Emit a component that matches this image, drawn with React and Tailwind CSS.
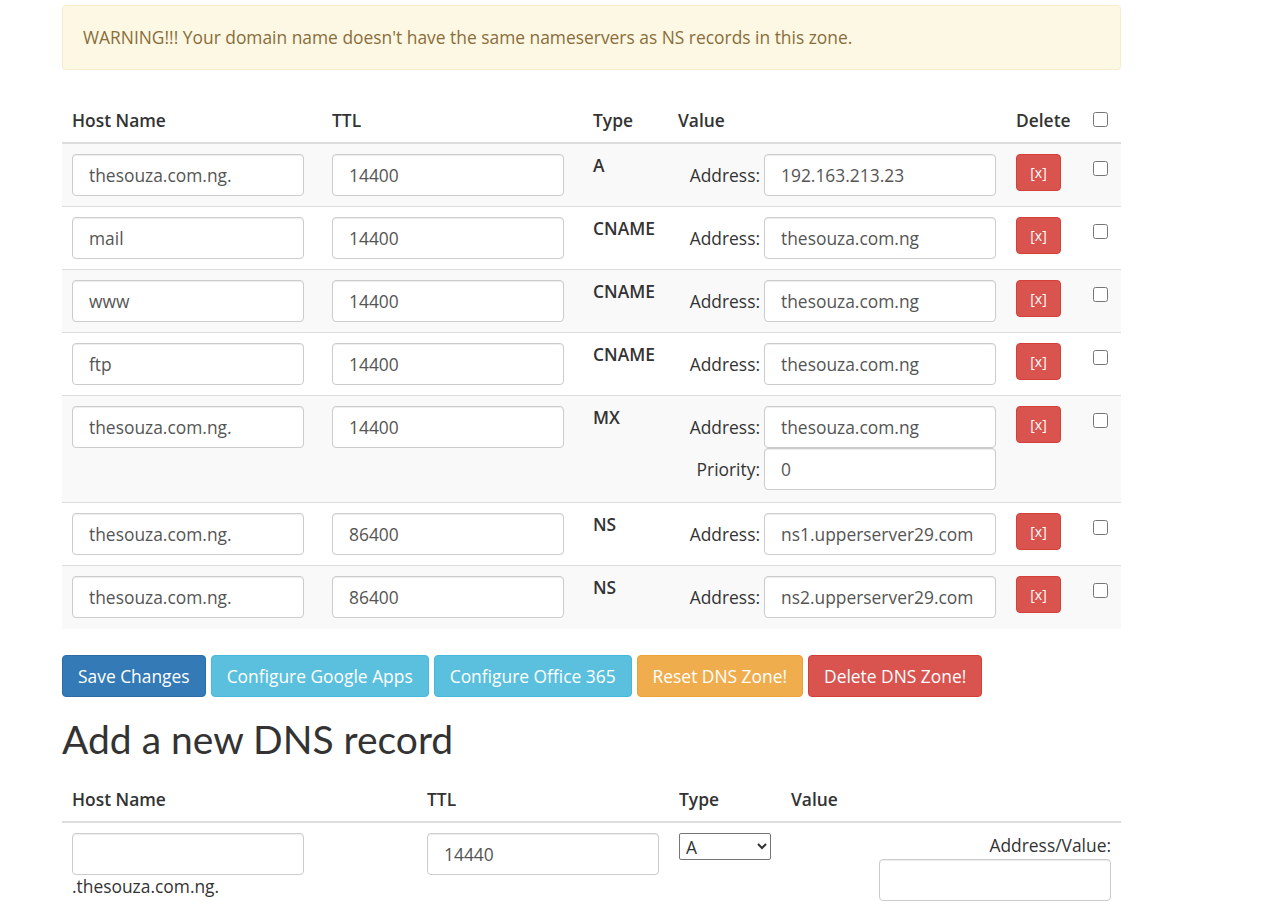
import React from 'react';

const records = [
  { host: 'thesouza.com.ng.', ttl: '14400', type: 'A', address: '192.163.213.23' },
  { host: 'mail', ttl: '14400', type: 'CNAME', address: 'thesouza.com.ng' },
  { host: 'www', ttl: '14400', type: 'CNAME', address: 'thesouza.com.ng' },
  { host: 'ftp', ttl: '14400', type: 'CNAME', address: 'thesouza.com.ng' },
  { host: 'thesouza.com.ng.', ttl: '14400', type: 'MX', address: 'thesouza.com.ng', priority: '0' },
  { host: 'thesouza.com.ng.', ttl: '86400', type: 'NS', address: 'ns1.upperserver29.com' },
  { host: 'thesouza.com.ng.', ttl: '86400', type: 'NS', address: 'ns2.upperserver29.com' },
];

const inputCls =
  'block w-[232px] h-[42px] rounded-[4px] border border-[#ccc] bg-white px-4 text-[17.4px] text-[#555] shadow-[inset_0_1px_1px_rgba(0,0,0,0.075)] outline-none';

const rowGrid = 'grid grid-cols-[260px_261px_85px_338px_75px_40px]';

function Field({ label, value }) {
  return (
    <div className="flex items-center justify-end gap-1">
      <span className="text-[#333]">{label}</span>
      <input className={inputCls} defaultValue={value} />
    </div>
  );
}

function RecordRow({ r, striped, last }) {
  const mx = r.priority !== undefined;
  return (
    <div className={`${rowGrid} ${striped ? 'bg-[#f9f9f9]' : 'bg-white'} ${last ? 'pb-px' : ''}`}>
      <div className="p-2.5">
        <input className={inputCls} defaultValue={r.host} />
      </div>
      <div className="p-2.5">
        <input className={inputCls} defaultValue={r.ttl} />
      </div>
      <div className="p-2.5 font-semibold">{r.type}</div>
      <div className={`px-2.5 pt-2.5 ${mx ? 'pb-[12px]' : 'pb-2.5'}`}>
        <Field label="Address:" value={r.address} />
        {mx && <Field label="Priority:" value={r.priority} />}
      </div>
      <div className="px-2.5 pt-2.5">
        <button className="h-[37px] w-[45px] rounded-[4px] border border-[#d43f3a] bg-[#d9534f] text-[14px] text-white">
          [x]
        </button>
      </div>
      <div className="pl-[12px] pt-[14px]">
        <input type="checkbox" className="h-[15px] w-[15px]" />
      </div>
    </div>
  );
}

const btn = 'h-[42px] rounded-[4px] border px-[15px] text-[17.4px] text-white';

export default function App() {
  return (
    <div
      className="min-h-screen bg-white text-[17.4px] leading-[23px] text-[#333]"
      style={{ fontFamily: '"Open Sans", "Liberation Sans", sans-serif' }}
    >
      <div className="ml-[62px] w-[1059px] pt-[5px]">
        <div className="rounded-[4px] border border-[#faebcc] bg-[#fcf8e3] px-5 py-5 text-[#8a6d3b]">
          WARNING!!! Your domain name doesn't have the same nameservers as NS records in this zone.
        </div>

        <div className="mt-[29px]">
          <div className={`${rowGrid} border-b-2 border-[#ddd] font-semibold`}>
            <div className="p-2.5">Host Name</div>
            <div className="p-2.5">TTL</div>
            <div className="p-2.5">Type</div>
            <div className="p-2.5">Value</div>
            <div className="p-2.5">Delete</div>
            <div className="pl-[12px] pt-[10px]">
              <input type="checkbox" className="h-[15px] w-[15px]" />
            </div>
          </div>
          <div className="divide-y divide-[#ddd]">
            {records.map((r, i) => (
              <RecordRow key={i} r={r} striped={i % 2 === 0} last={i === records.length - 1} />
            ))}
          </div>
        </div>

        <div className="mt-[26px] flex gap-[5px]">
          <button className={`${btn} border-[#2e6da4] bg-[#337ab7]`}>Save Changes</button>
          <button className={`${btn} border-[#46b8da] bg-[#5bc0de]`}>Configure Google Apps</button>
          <button className={`${btn} border-[#46b8da] bg-[#5bc0de]`}>Configure Office 365</button>
          <button className={`${btn} border-[#eea236] bg-[#f0ad4e]`}>Reset DNS Zone!</button>
          <button className={`${btn} border-[#d43f3a] bg-[#d9534f]`}>Delete DNS Zone!</button>
        </div>

        <h1
          className="mt-[21px] text-[39px] leading-[43px] text-[#333]"
          style={{ fontFamily: 'Lato, "Open Sans", sans-serif' }}
        >
          Add a new DNS record
        </h1>

        <div className="mt-[17px]">
          <div className="grid grid-cols-[355px_252px_112px_340px] border-b-2 border-[#ddd] font-semibold">
            <div className="p-2.5">Host Name</div>
            <div className="p-2.5">TTL</div>
            <div className="p-2.5">Type</div>
            <div className="p-2.5">Value</div>
          </div>
          <div className="grid grid-cols-[355px_252px_112px_340px]">
            <div className="p-2.5">
              <input className={inputCls} />
              <div>.thesouza.com.ng.</div>
            </div>
            <div className="p-2.5">
              <input className={inputCls} defaultValue="14440" />
            </div>
            <div className="p-2.5">
              <select className="h-[27px] w-[92px] rounded-[2px] border border-[#767676] bg-white px-0.5 text-[17.4px] text-[#333]">
                <option>A</option>
                <option>CNAME</option>
                <option>MX</option>
                <option>TXT</option>
              </select>
            </div>
            <div className="flex flex-col items-end gap-[2px] px-2.5 pt-[11px] pb-2.5">
              <span>Address/Value:</span>
              <input className={inputCls} />
            </div>
          </div>
        </div>
      </div>
    </div>
  );
}
